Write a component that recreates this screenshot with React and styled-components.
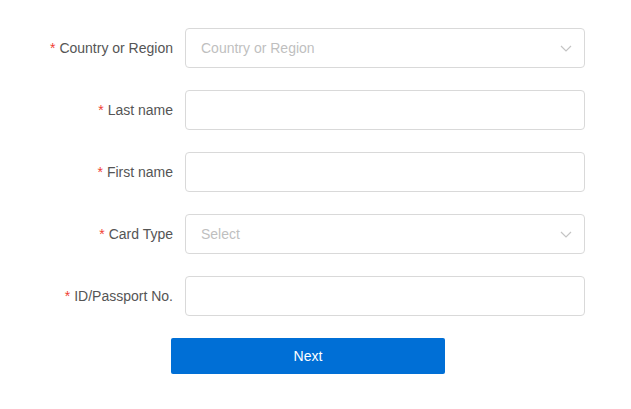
import styled, { createGlobalStyle } from "styled-components";

const GlobalStyle = createGlobalStyle`
  body {
    margin: 0;
    background: #fff;
    font-family: "Liberation Sans", Arial, sans-serif;
  }
`;

const fields = [
  { label: "Country or Region", type: "select", placeholder: "Country or Region" },
  { label: "Last name", type: "input" },
  { label: "First name", type: "input" },
  { label: "Card Type", type: "select", placeholder: "Select" },
  { label: "ID/Passport No.", type: "input" },
];

function Chevron() {
  return (
    <svg width="12" height="7" viewBox="0 0 12 7" fill="none">
      <path d="M1 1l5 5 5-5" stroke="#c4c4c4" strokeWidth="1.2" />
    </svg>
  );
}

export default function App() {
  return (
    <Page>
      <GlobalStyle />
      <Form>
        {fields.map((f) => (
          <Row key={f.label}>
            <Label>
              <Star>*</Star>
              {f.label}
            </Label>
            {f.type === "select" ? (
              <SelectBox>
                <Placeholder>{f.placeholder}</Placeholder>
                <Chevron />
              </SelectBox>
            ) : (
              <Input />
            )}
          </Row>
        ))}
        <Actions>
          <Button>Next</Button>
        </Actions>
      </Form>
    </Page>
  );
}

const Page = styled.div`
  padding-top: 28px;
`;

const Form = styled.div`
  display: flex;
  flex-direction: column;
  gap: 22px;
`;

const Row = styled.div`
  display: grid;
  grid-template-columns: 173px 400px;
  column-gap: 12px;
  align-items: center;
`;

const Label = styled.label`
  text-align: right;
  font-size: 14px;
  color: #555;
`;

const Star = styled.span`
  color: #f04134;
  margin-right: 4px;
`;

const fieldBase = `
  box-sizing: border-box;
  height: 40px;
  width: 400px;
  border: 1px solid #d9d9d9;
  border-radius: 4px;
  background: #fff;
`;

const Input = styled.input`
  ${fieldBase}
  padding: 0 15px;
  font-size: 14px;
  font-family: inherit;
  outline: none;
`;

const SelectBox = styled.div`
  ${fieldBase}
  display: flex;
  align-items: center;
  justify-content: space-between;
  padding: 0 12px 0 15px;
`;

const Placeholder = styled.span`
  font-size: 14px;
  color: #bfbfbf;
`;

const Actions = styled.div`
  padding-left: 171px;
`;

const Button = styled.button`
  width: 274px;
  height: 36px;
  border: none;
  border-radius: 2px;
  background: #006fd6;
  color: #fff;
  font-size: 14px;
  font-family: inherit;
  cursor: pointer;
`;
